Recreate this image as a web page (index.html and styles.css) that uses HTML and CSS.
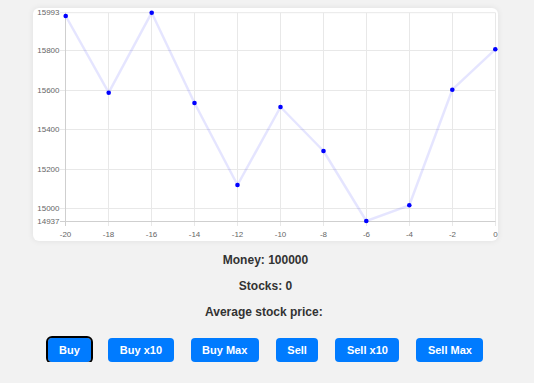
FILE: index.html
```html
<!DOCTYPE html>
<html lang="en">
<head>
    <meta charset="UTF-8">
    <meta name="viewport" content="width=device-width, initial-scale=1.0">
    <title>Stock Game</title>
    <link rel="stylesheet" href="styles.css">
</head>
<body>
    <div class="chart-card">
        <svg class="chart" viewBox="0 0 465 233" width="465" height="233">
            <!-- grid -->
            <g class="grid">
                <line x1="75.5" y1="4.7" x2="75.5" y2="218"/>
                <line x1="118.5" y1="4.7" x2="118.5" y2="218"/>
                <line x1="161.5" y1="4.7" x2="161.5" y2="218"/>
                <line x1="204.5" y1="4.7" x2="204.5" y2="218"/>
                <line x1="247.5" y1="4.7" x2="247.5" y2="218"/>
                <line x1="290.5" y1="4.7" x2="290.5" y2="218"/>
                <line x1="333.5" y1="4.7" x2="333.5" y2="218"/>
                <line x1="376.5" y1="4.7" x2="376.5" y2="218"/>
                <line x1="419.5" y1="4.7" x2="419.5" y2="218"/>
                <line x1="462.5" y1="4.7" x2="462.5" y2="218"/>
                <line x1="27" y1="4.7" x2="462.5" y2="4.7"/>
                <line x1="27" y1="42.5" x2="462.5" y2="42.5"/>
                <line x1="27" y1="82.5" x2="462.5" y2="82.5"/>
                <line x1="27" y1="121.5" x2="462.5" y2="121.5"/>
                <line x1="27" y1="161.5" x2="462.5" y2="161.5"/>
                <line x1="27" y1="200.5" x2="462.5" y2="200.5"/>
            </g>
            <g class="axis">
                <line x1="32.5" y1="4.7" x2="32.5" y2="218"/>
                <line x1="27" y1="213.5" x2="462.5" y2="213.5"/>
            </g>
            <!-- y labels -->
            <g class="labels y-labels">
                <text x="26.5" y="5">15993</text>
                <text x="26.5" y="43">15800</text>
                <text x="26.5" y="82.5">15600</text>
                <text x="26.5" y="122">15400</text>
                <text x="26.5" y="161.5">15200</text>
                <text x="26.5" y="201">15000</text>
                <text x="26.5" y="213.5">14937</text>
            </g>
            <!-- x labels -->
            <g class="labels x-labels">
                <text x="32.5" y="227">-20</text>
                <text x="75.5" y="227">-18</text>
                <text x="118.5" y="227">-16</text>
                <text x="161.5" y="227">-14</text>
                <text x="204.5" y="227">-12</text>
                <text x="247.5" y="227">-10</text>
                <text x="290.5" y="227">-8</text>
                <text x="333.5" y="227">-6</text>
                <text x="376.5" y="227">-4</text>
                <text x="419.5" y="227">-2</text>
                <text x="462.5" y="227">0</text>
            </g>
            <!-- price line -->
            <polyline class="price-line" points="32.7,8 75.7,84.7 118.7,4.7 161.5,95 204.5,177 247.5,99 290.5,143 333.3,213 376.3,197.3 419.3,81.7 462.3,41.3"/>
            <g class="points">
                <circle cx="32.7" cy="8" r="2.3"/>
                <circle cx="75.7" cy="84.7" r="2.3"/>
                <circle cx="118.7" cy="4.7" r="2.3"/>
                <circle cx="161.5" cy="95" r="2.3"/>
                <circle cx="204.5" cy="177" r="2.3"/>
                <circle cx="247.5" cy="99" r="2.3"/>
                <circle cx="290.5" cy="143" r="2.3"/>
                <circle cx="333.3" cy="213" r="2.3"/>
                <circle cx="376.3" cy="197.3" r="2.3"/>
                <circle cx="419.3" cy="81.7" r="2.3"/>
                <circle cx="462.3" cy="41.3" r="2.3"/>
            </g>
        </svg>
    </div>

    <div class="stats">
        <p>Money: 100000</p>
        <p>Stocks: 0</p>
        <p>Average stock price: </p>
    </div>

    <div class="actions">
        <button class="btn focused">Buy</button>
        <button class="btn">Buy x10</button>
        <button class="btn">Buy Max</button>
        <button class="btn">Sell</button>
        <button class="btn">Sell x10</button>
        <button class="btn">Sell Max</button>
    </div>
</body>
</html>
```

FILE: styles.css
```css
body {
    font-family: Arial, "Liberation Sans", sans-serif;
    display: flex;
    flex-direction: column;
    align-items: center;
    margin: 0;
    padding: 8px 3px 0 0;
    background-color: #f2f2f2;
    color: #333;
}
.chart-card {
    width: 465px;
    height: 233px;
    background-color: white;
    border-radius: 6px;
    box-shadow: 0 0 6px rgba(0,0,0,0.08);
}
.chart {
    display: block;
}
.grid line {
    stroke: #e8e8e8;
    stroke-width: 1;
}
.axis line {
    stroke: #cfcfcf;
    stroke-width: 1;
}
.labels text {
    font-family: Arial, "Liberation Sans", sans-serif;
    font-size: 8px;
    fill: #666;
}
.y-labels text {
    text-anchor: end;
    dominant-baseline: middle;
}
.x-labels text {
    text-anchor: middle;
    dominant-baseline: middle;
}
.price-line {
    fill: none;
    stroke: rgba(0,0,255,0.1);
    stroke-width: 2.5;
    stroke-linejoin: round;
}
.points circle {
    fill: #0000ff;
}
.stats {
    display: flex;
    flex-direction: column;
    align-items: center;
    gap: 12px;
    margin-top: 12px;
}
.stats p {
    margin: 0;
    font-size: 12px;
    line-height: 14px;
    font-weight: bold;
    white-space: pre;
}
.actions {
    display: flex;
    gap: 17px;
    margin-top: 19px;
}
.btn {
    font-family: Arial, "Liberation Sans", sans-serif;
    font-size: 11px;
    font-weight: bold;
    line-height: 14px;
    color: white;
    background-color: #007bff;
    border: none;
    border-radius: 4px;
    padding: 5px 11.5px;
    cursor: pointer;
}
.btn.focused {
    outline: 2px solid #000;
    outline-offset: 0;
}
```
